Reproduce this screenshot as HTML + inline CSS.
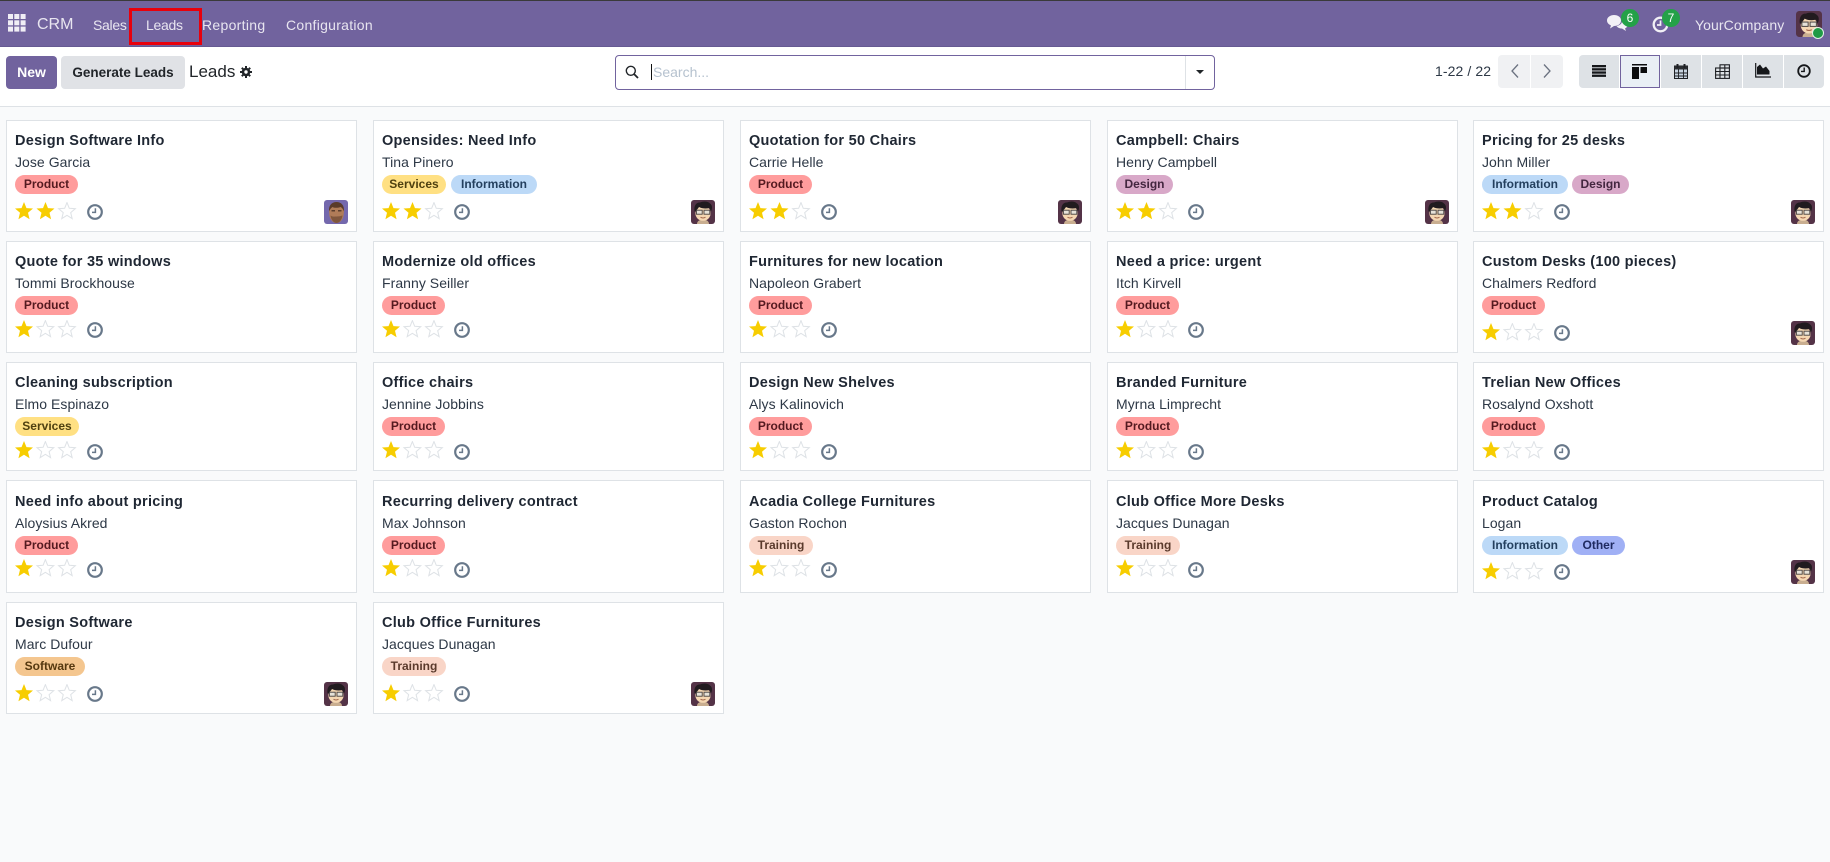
<!DOCTYPE html>
<html lang="en"><head><meta charset="utf-8"><title>Leads - CRM</title>
<style>
*{box-sizing:border-box}
html,body{margin:0;padding:0}
body{width:1830px;height:862px;overflow:hidden;position:relative;background:#f9fafb;font-family:"Liberation Sans",sans-serif;color:#212529}
.a{position:absolute}
#nav{position:absolute;left:0;top:0;width:1830px;height:47px;background:#71639e;border-top:1px solid #3a3a3a;border-bottom:1px solid #665a92}
.n{position:absolute;top:14px;line-height:20px;font-size:14px;color:#e8e5f0;letter-spacing:.25px;white-space:nowrap}
#cp{position:absolute;left:0;top:47px;width:1830px;height:60px;background:#fff;border-bottom:1px solid #dee2e6}
.btn{position:absolute;top:56px;height:33px;border-radius:4px;font-size:14px;font-weight:bold;line-height:33px;text-align:center;white-space:nowrap}
.v{position:absolute;top:55px;height:33px;width:40px;background:#dee2e6}
.c{position:absolute;width:351px;background:#fff;box-shadow:inset 0 0 0 1px #dee2e6;
--st:82px;--ck:84px}
.c.av{--st:82px;--ck:84px}
.c.nav0{--st:79px;--ck:82px}
.r1{top:120px;height:112px;--t:21px;--m:42px;--g:55px}
.r2{top:241px;height:112px;--t:21px;--m:42px;--g:55px}
.r3{top:362px;height:109px;--t:21px;--m:42px;--g:55px}
.r4{top:480px;height:113px;--t:22px;--m:43px;--g:56px}
.r5{top:602px;height:112px;--t:21px;--m:42px;--g:55px}
.x1{left:6px}.x2{left:373px}.x3{left:740px}.x4{left:1107px}.x5{left:1473px}
.ti{position:absolute;left:9px;top:calc(var(--t) - 10px);line-height:20px;font-size:14.5px;font-weight:bold;color:#1f2733;letter-spacing:.27px;white-space:nowrap}
.nm{position:absolute;left:9px;top:calc(var(--m) - 10px);line-height:20px;font-size:14px;color:#2d3846;letter-spacing:.05px;white-space:nowrap}
.tg{position:absolute;top:var(--g);height:19px;border-radius:10px;line-height:19px;font-size:12px;font-weight:bold;text-align:center;white-space:nowrap}
.P{background:#ff9c9c;color:#541a20;width:63px}
.S{background:#ffe083;color:#4f4110;width:64px}
.I{background:#bcd9f7;color:#24405f;width:86px}
.D{background:#d8a8c8;color:#43263f;width:57px}
.T{background:#f9d5c7;color:#5a3a2c;width:64px}
.W{background:#f4c68f;color:#55380f;width:70px}
.O{background:#a0b0f5;color:#1f2a60;width:53px}
.st{position:absolute;left:9px;top:var(--st);width:62px;height:18px}
.ck{position:absolute;left:81px;top:var(--ck);width:16px;height:16px}
.av24{position:absolute;left:318px;top:80px;width:24px;height:24px}
</style></head><body>
<svg width="0" height="0" style="position:absolute">
<defs>
<polygon id="p" points="9,0 11.47,6.1 18,6.56 13,10.8 14.58,17.2 9,13.7 3.42,17.2 5,10.8 0,6.56 6.53,6.1"/>
<symbol id="s2" viewBox="0 0 62 18"><use href="#p" fill="#f7cd00"/><use href="#p" x="21.5" fill="#f7cd00"/><use href="#p" transform="translate(43.6 .6) scale(.93)" fill="#fff" stroke="#dee2e6" stroke-width="1.1"/></symbol>
<symbol id="s1" viewBox="0 0 62 18"><use href="#p" fill="#f7cd00"/><use href="#p" transform="translate(22 .6) scale(.93)" fill="#fff" stroke="#dee2e6" stroke-width="1.1"/><use href="#p" transform="translate(43.6 .6) scale(.93)" fill="#fff" stroke="#dee2e6" stroke-width="1.1"/></symbol>
<symbol id="ck" viewBox="0 0 16 16"><circle cx="8" cy="8" r="6.800" fill="#fff" stroke="#68788a" stroke-width="2.200"/><path d="M8.400 4.200V8.400H5" fill="none" stroke="#68788a" stroke-width="1.500"/></symbol>
<symbol id="me" viewBox="0 0 24 24">
<rect width="24" height="24" rx="3" fill="#543347"/>
<path d="M6 24c0-3 3-4.500 6-4.500s6 1.500 6 4.500z" fill="#c9ae90"/>
<ellipse cx="12" cy="13.200" rx="7.600" ry="7.600" fill="#f5d7b2"/>
<path d="M3.500 11.500C2.500 5 6 2 9 2.500c3-1.500 8-1.500 10 1 2.500 1.500 2.500 5 1 8l-1.500-3.500C15 9 10.500 8.500 8 7c-1 2-2.500 2.500-3 4.500z" fill="#211b1f"/>
<rect x="5.400" y="10.200" width="5.800" height="4" fill="#e6e2d8" stroke="#45403f" stroke-width=".9"/>
<rect x="13" y="10.200" width="5.800" height="4" fill="#e6e2d8" stroke="#45403f" stroke-width=".9"/>
<path d="M9.500 17.200c1.600 1 3.400 1 5 0" stroke="#a3684c" stroke-width="1" fill="none"/>
</symbol>
<symbol id="jg" viewBox="0 0 24 24">
<rect width="24" height="24" rx="3" fill="#7468ad"/>
<path d="M5 11c0-5 3.500-8 7.500-8S20 6 20 11l-.5 5c-1 4.500-4 7-7 7s-6-2.500-7-7z" fill="#b07c58"/>
<path d="M5 11.500C4.500 5 8 2 12.500 2S20.500 5 20 11.500c-1-2.500-2-4-3.500-4.500-2.500 1-6.500 1-8 0C7 8 5.800 9.500 5 11.500z" fill="#5a3b2a"/>
<path d="M6.500 15.500c2 1.500 3.500 1 6 1s4-.5 6-1c-.5 4.500-3.500 7.500-6 7.500s-5.500-3-6-7.500z" fill="#80573d"/>
<path d="M7.500 10.800h3.500M14 10.800h3.500" stroke="#3f2a1f" stroke-width="1.100"/>
</symbol>
</defs>
</svg>

<div id="nav">
<svg class="a" style="left:8px;top:13px" width="18" height="18" viewBox="0 0 18 18" fill="#f0eef5"><rect width="5" height="5"/><rect x="6.300" width="5" height="5"/><rect x="12.600" width="5" height="5"/><rect y="6.300" width="5" height="5"/><rect x="6.300" y="6.300" width="5" height="5"/><rect x="12.600" y="6.300" width="5" height="5"/><rect y="12.600" width="5" height="5"/><rect x="6.300" y="12.600" width="5" height="5"/><rect x="12.600" y="12.600" width="5" height="5"/></svg>
<div class="n" style="left:37px;font-size:16px;letter-spacing:0">CRM</div>
<div class="n" style="left:93px;letter-spacing:-.3px">Sales</div>
<div class="n" style="left:146px;letter-spacing:-.3px">Leads</div>
<div class="n" style="left:202px;letter-spacing:.3px">Reporting</div>
<div class="n" style="left:286px;letter-spacing:.28px">Configuration</div>
<div class="a" style="left:129px;top:7px;width:73px;height:37px;border:3px solid #e8000c"></div>
<svg class="a" style="left:1607px;top:13px" width="22" height="18" viewBox="0 0 22 18" fill="#f2f0f6"><path d="M7 1c4 0 7 2 7 5.500S11 12 7 12L3 14.500 4 11.500C2 10.500 0 9 0 6.500 0 3 3.500 1 7 1z"/><path d="M15 5c3.500.5 6 2.500 6 5 0 2-1 3.500-3 4.500l1 2.500-4-2.500c-2.500 0-4.500-1-5.500-2.500C13 11.500 16 9 15 5z"/></svg>
<div class="a" style="left:1621px;top:8px;width:18px;height:18px;border-radius:50%;background:#24a148;color:#fff;font-size:12px;line-height:18px;text-align:center">6</div>
<svg class="a" style="left:1652px;top:15px" width="17" height="17" viewBox="0 0 17 17"><circle cx="8.500" cy="8.500" r="6.800" fill="none" stroke="#f2f0f6" stroke-width="2.300"/><path d="M8.500 4.500V9H5" fill="none" stroke="#f2f0f6" stroke-width="1.700"/></svg>
<div class="a" style="left:1662px;top:8px;width:18px;height:18px;border-radius:50%;background:#24a148;color:#fff;font-size:12px;line-height:18px;text-align:center">7</div>
<div class="n" style="left:1695px;letter-spacing:.1px">YourCompany</div>
<svg class="a" style="left:1796px;top:10px" width="26" height="26"><use href="#me" width="26" height="26"/></svg>
<div class="a" style="left:1812px;top:26px;width:12px;height:12px;border-radius:50%;background:#1f9a45;border:1.500px solid #e6f2ea"></div>
</div>

<div id="cp"></div>
<div class="btn" style="left:6px;width:51px;background:#71639e;color:#fff">New</div>
<div class="btn" style="left:61px;width:124px;background:#e0e2e6;color:#212529;font-size:13.500px;letter-spacing:0">Generate Leads</div>
<div class="a" style="left:189px;top:61px;font-size:17px;line-height:22px">Leads</div>
<svg class="a" style="left:240px;top:66px" width="12" height="12" viewBox="0 0 12 12"><path d="M6 0v12M0 6h12M1.800 1.800l8.400 8.400M10.200 1.800l-8.400 8.400" stroke="#212529" stroke-width="2"/><circle cx="6" cy="6" r="4.300" fill="#212529"/><circle cx="6" cy="6" r="1.700" fill="#fff"/></svg>

<div class="a" style="left:615px;top:55px;width:600px;height:35px;border:1px solid #71639e;border-radius:4px;background:#fff"></div>
<svg class="a" style="left:625px;top:65px" width="14" height="14" viewBox="0 0 14 14" fill="none" stroke="#212529"><circle cx="5.800" cy="5.800" r="4.500" stroke-width="1.400"/><path d="M9 9l4 4" stroke-width="1.800"/></svg>
<div class="a" style="left:651px;top:64px;width:1px;height:16px;background:#111"></div>
<div class="a" style="left:653px;top:62px;font-size:14px;line-height:20px;color:#b6c2cf">Search...</div>
<div class="a" style="left:1185px;top:56px;width:1px;height:33px;background:#dee2e6"></div>
<div class="a" style="left:1196px;top:70px;width:0;height:0;border-left:4px solid transparent;border-right:4px solid transparent;border-top:4.500px solid #212529"></div>

<div class="a" style="left:1435px;top:61px;font-size:14px;line-height:20px;color:#2d3846;letter-spacing:.1px">1-22 / 22</div>
<div class="a" style="left:1498px;top:55px;width:32px;height:33px;background:#f0f1f3;border-radius:4px 0 0 4px"></div>
<div class="a" style="left:1531px;top:55px;width:32px;height:33px;background:#f0f1f3;border-radius:0 4px 4px 0"></div>
<svg class="a" style="left:1510px;top:63px" width="10" height="16" viewBox="0 0 10 16" fill="none" stroke="#6b7280" stroke-width="1.300"><path d="M8 1.500L2 8l6 6.500"/></svg>
<svg class="a" style="left:1542px;top:63px" width="10" height="16" viewBox="0 0 10 16" fill="none" stroke="#6b7280" stroke-width="1.300"><path d="M2 1.500L8 8l-6 6.500"/></svg>

<div class="v" style="left:1579px;border-radius:4px 0 0 4px"></div>
<div class="v" style="left:1620px;background:#e9eff5;border:1px solid #71639e"></div>
<div class="v" style="left:1661px"></div>
<div class="v" style="left:1702px"></div>
<div class="v" style="left:1743px"></div>
<div class="v" style="left:1784px;border-radius:0 4px 4px 0"></div>
<svg class="a" style="left:1592px;top:65px" width="14" height="12" viewBox="0 0 14 12" fill="#15171a"><rect width="14" height="2.300"/><rect y="3.200" width="14" height="2.300"/><rect y="6.400" width="14" height="2.300"/><rect y="9.600" width="14" height="2.300"/></svg>
<svg class="a" style="left:1632px;top:64px" width="16" height="15" viewBox="0 0 16 15" fill="#0b0c0e"><rect width="15" height="1.500"/><rect y="3" width="7" height="12"/><rect x="8.500" y="3" width="6.500" height="6"/></svg>
<svg class="a" style="left:1674px;top:64px" width="14" height="15" viewBox="0 0 14 15"><rect x=".5" y="2" width="13" height="12.500" fill="#c8d4e0" stroke="#1e2024"/><rect x=".5" y="2" width="13" height="3.500" fill="#2a2c30"/><rect x="2.500" y="0" width="2" height="4" fill="#1e2024"/><rect x="9.500" y="0" width="2" height="4" fill="#1e2024"/><path d="M0 9h14M0 12h14M4.500 5v9M9.500 5v9" stroke="#1e2024" stroke-width=".9"/></svg>
<svg class="a" style="left:1715px;top:64px" width="15" height="15" viewBox="0 0 15 15" fill="none" stroke="#1e2024" stroke-width="1.100"><rect x=".6" y="4" width="13.800" height="10.400"/><rect x="5" y=".8" width="9.400" height="3.200"/><path d="M0 7.500h15M0 11h15M5 4v10.400M9.800 .8v13.600"/></svg>
<svg class="a" style="left:1755px;top:63px" width="16" height="15" viewBox="0 0 16 15"><path d="M2 11.500V4l3-2.500 3 4 3-2 3.500 4.500v3.500z" fill="#15171a"/><path d="M.7 0v14h15.300" fill="none" stroke="#15171a" stroke-width="1.200"/></svg>
<svg class="a" style="left:1797px;top:64px" width="14" height="14" viewBox="0 0 14 14"><circle cx="7" cy="7" r="5.800" fill="none" stroke="#15171a" stroke-width="1.800"/><path d="M7.200 3.500V7.400H4" fill="none" stroke="#15171a" stroke-width="1.400"/></svg>

<!-- Row 1 -->
<div class="c r1 x1 av"><div class="ti">Design Software Info</div><div class="nm">Jose Garcia</div><div class="tg P" style="left:9px">Product</div><svg class="st"><use href="#s2" width="62" height="18"/></svg><svg class="ck"><use href="#ck" width="16" height="16"/></svg><svg class="av24"><use href="#jg" width="24" height="24"/></svg></div>
<div class="c r1 x2 av"><div class="ti">Opensides: Need Info</div><div class="nm">Tina Pinero</div><div class="tg S" style="left:9px">Services</div><div class="tg I" style="left:78px">Information</div><svg class="st"><use href="#s2" width="62" height="18"/></svg><svg class="ck"><use href="#ck" width="16" height="16"/></svg><svg class="av24"><use href="#me" width="24" height="24"/></svg></div>
<div class="c r1 x3 av"><div class="ti">Quotation for 50 Chairs</div><div class="nm">Carrie Helle</div><div class="tg P" style="left:9px">Product</div><svg class="st"><use href="#s2" width="62" height="18"/></svg><svg class="ck"><use href="#ck" width="16" height="16"/></svg><svg class="av24"><use href="#me" width="24" height="24"/></svg></div>
<div class="c r1 x4 av"><div class="ti">Campbell: Chairs</div><div class="nm">Henry Campbell</div><div class="tg D" style="left:9px">Design</div><svg class="st"><use href="#s2" width="62" height="18"/></svg><svg class="ck"><use href="#ck" width="16" height="16"/></svg><svg class="av24"><use href="#me" width="24" height="24"/></svg></div>
<div class="c r1 x5 av"><div class="ti">Pricing for 25 desks</div><div class="nm">John Miller</div><div class="tg I" style="left:9px">Information</div><div class="tg D" style="left:99px">Design</div><svg class="st"><use href="#s2" width="62" height="18"/></svg><svg class="ck"><use href="#ck" width="16" height="16"/></svg><svg class="av24"><use href="#me" width="24" height="24"/></svg></div>

<!-- Row 2 -->
<div class="c r2 x1 nav0"><div class="ti">Quote for 35 windows</div><div class="nm">Tommi Brockhouse</div><div class="tg P" style="left:9px">Product</div><svg class="st"><use href="#s1" width="62" height="18"/></svg><svg class="ck" style="top:81px"><use href="#ck" width="16" height="16"/></svg></div>
<div class="c r2 x2 nav0"><div class="ti">Modernize old offices</div><div class="nm">Franny Seiller</div><div class="tg P" style="left:9px">Product</div><svg class="st"><use href="#s1" width="62" height="18"/></svg><svg class="ck" style="top:81px"><use href="#ck" width="16" height="16"/></svg></div>
<div class="c r2 x3 nav0"><div class="ti">Furnitures for new location</div><div class="nm">Napoleon Grabert</div><div class="tg P" style="left:9px">Product</div><svg class="st"><use href="#s1" width="62" height="18"/></svg><svg class="ck" style="top:81px"><use href="#ck" width="16" height="16"/></svg></div>
<div class="c r2 x4 nav0"><div class="ti">Need a price: urgent</div><div class="nm">Itch Kirvell</div><div class="tg P" style="left:9px">Product</div><svg class="st"><use href="#s1" width="62" height="18"/></svg><svg class="ck" style="top:81px"><use href="#ck" width="16" height="16"/></svg></div>
<div class="c r2 x5 av"><div class="ti">Custom Desks (100 pieces)</div><div class="nm">Chalmers Redford</div><div class="tg P" style="left:9px">Product</div><svg class="st"><use href="#s1" width="62" height="18"/></svg><svg class="ck"><use href="#ck" width="16" height="16"/></svg><svg class="av24"><use href="#me" width="24" height="24"/></svg></div>

<!-- Row 3 -->
<div class="c r3 x1 nav0"><div class="ti">Cleaning subscription</div><div class="nm">Elmo Espinazo</div><div class="tg S" style="left:9px">Services</div><svg class="st"><use href="#s1" width="62" height="18"/></svg><svg class="ck"><use href="#ck" width="16" height="16"/></svg></div>
<div class="c r3 x2 nav0"><div class="ti">Office chairs</div><div class="nm">Jennine Jobbins</div><div class="tg P" style="left:9px">Product</div><svg class="st"><use href="#s1" width="62" height="18"/></svg><svg class="ck"><use href="#ck" width="16" height="16"/></svg></div>
<div class="c r3 x3 nav0"><div class="ti">Design New Shelves</div><div class="nm">Alys Kalinovich</div><div class="tg P" style="left:9px">Product</div><svg class="st"><use href="#s1" width="62" height="18"/></svg><svg class="ck"><use href="#ck" width="16" height="16"/></svg></div>
<div class="c r3 x4 nav0"><div class="ti">Branded Furniture</div><div class="nm">Myrna Limprecht</div><div class="tg P" style="left:9px">Product</div><svg class="st"><use href="#s1" width="62" height="18"/></svg><svg class="ck"><use href="#ck" width="16" height="16"/></svg></div>
<div class="c r3 x5 nav0"><div class="ti">Trelian New Offices</div><div class="nm">Rosalynd Oxshott</div><div class="tg P" style="left:9px">Product</div><svg class="st"><use href="#s1" width="62" height="18"/></svg><svg class="ck"><use href="#ck" width="16" height="16"/></svg></div>

<!-- Row 4 -->
<div class="c r4 x1 nav0"><div class="ti">Need info about pricing</div><div class="nm">Aloysius Akred</div><div class="tg P" style="left:9px">Product</div><svg class="st"><use href="#s1" width="62" height="18"/></svg><svg class="ck"><use href="#ck" width="16" height="16"/></svg></div>
<div class="c r4 x2 nav0"><div class="ti">Recurring delivery contract</div><div class="nm">Max Johnson</div><div class="tg P" style="left:9px">Product</div><svg class="st"><use href="#s1" width="62" height="18"/></svg><svg class="ck"><use href="#ck" width="16" height="16"/></svg></div>
<div class="c r4 x3 nav0"><div class="ti">Acadia College Furnitures</div><div class="nm">Gaston Rochon</div><div class="tg T" style="left:9px">Training</div><svg class="st"><use href="#s1" width="62" height="18"/></svg><svg class="ck"><use href="#ck" width="16" height="16"/></svg></div>
<div class="c r4 x4 nav0"><div class="ti">Club Office More Desks</div><div class="nm">Jacques Dunagan</div><div class="tg T" style="left:9px">Training</div><svg class="st"><use href="#s1" width="62" height="18"/></svg><svg class="ck"><use href="#ck" width="16" height="16"/></svg></div>
<div class="c r4 x5 av"><div class="ti">Product Catalog</div><div class="nm">Logan</div><div class="tg I" style="left:9px">Information</div><div class="tg O" style="left:99px">Other</div><svg class="st"><use href="#s1" width="62" height="18"/></svg><svg class="ck"><use href="#ck" width="16" height="16"/></svg><svg class="av24"><use href="#me" width="24" height="24"/></svg></div>

<!-- Row 5 -->
<div class="c r5 x1 av"><div class="ti">Design Software</div><div class="nm">Marc Dufour</div><div class="tg W" style="left:9px">Software</div><svg class="st"><use href="#s1" width="62" height="18"/></svg><svg class="ck"><use href="#ck" width="16" height="16"/></svg><svg class="av24"><use href="#me" width="24" height="24"/></svg></div>
<div class="c r5 x2 av"><div class="ti">Club Office Furnitures</div><div class="nm">Jacques Dunagan</div><div class="tg T" style="left:9px">Training</div><svg class="st"><use href="#s1" width="62" height="18"/></svg><svg class="ck"><use href="#ck" width="16" height="16"/></svg><svg class="av24"><use href="#me" width="24" height="24"/></svg></div>
</body></html>
